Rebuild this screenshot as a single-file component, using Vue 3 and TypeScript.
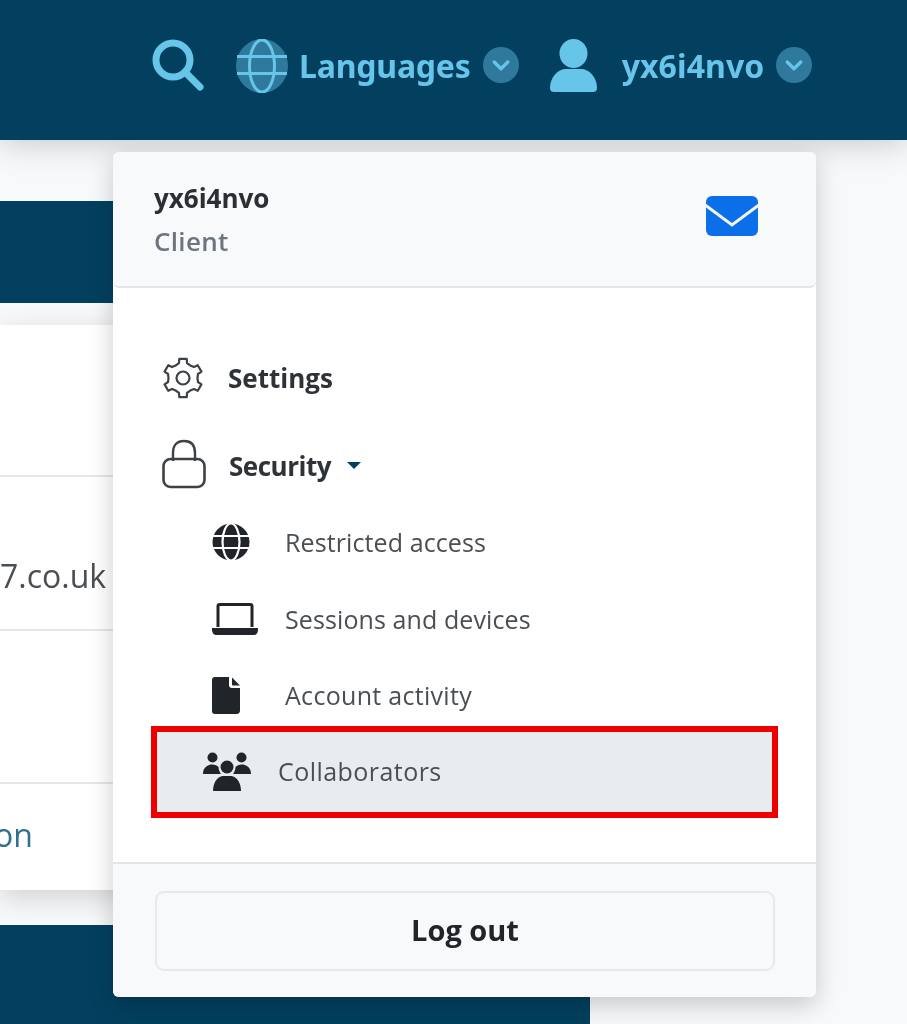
<script setup lang="ts">
const gearPath = (() => {
  const cx = 21, cy = 21;
  const pts: string[] = [];
  for (let i = 0; i < 6; i++) {
    const a = -90 + i * 60;
    const spec: [number, number][] = [[-30, 14.5], [-15, 15.5], [-11, 19.5], [11, 19.5], [15, 15.5]];
    for (const [d, r] of spec) {
      const t = ((a + d) * Math.PI) / 180;
      pts.push(`${(cx + r * Math.cos(t)).toFixed(2)} ${(cy + r * Math.sin(t)).toFixed(2)}`);
    }
  }
  return `M${pts.join('L')}Z`;
})();

const subItems = [
  { label: 'Restricted access', icon: 'globe' },
  { label: 'Sessions and devices', icon: 'laptop' },
  { label: 'Account activity', icon: 'file' },
];
</script>

<template>
  <div class="page">
    <header class="topbar">
      <svg class="ic-search" viewBox="0 0 52 52" aria-hidden="true">
        <circle cx="21" cy="21" r="17" fill="none" stroke="#66c5e8" stroke-width="7" />
        <path d="M33 33 L48 48" stroke="#66c5e8" stroke-width="7" stroke-linecap="round" />
      </svg>
      <svg class="ic-globe" viewBox="0 0 52 54" aria-hidden="true">
        <ellipse cx="26" cy="27" rx="26" ry="27" fill="#2f7a9c" />
        <ellipse cx="26" cy="27" rx="12.500" ry="26" fill="none" stroke="#66c5e8" stroke-width="3" />
        <path d="M1 17.500H51M1 34.500H51" stroke="#66c5e8" stroke-width="3" />
      </svg>
      <span class="top-label lang">Languages</span>
      <span class="chev">
        <svg viewBox="0 0 20 20" aria-hidden="true"><path d="M5.500 8 L10 12.500 L14.500 8" fill="none" stroke="#66c5e8" stroke-width="2.200" stroke-linecap="round" stroke-linejoin="round" /></svg>
      </span>
      <svg class="ic-user" viewBox="0 0 47 53" aria-hidden="true">
        <ellipse cx="23.500" cy="14.500" rx="14" ry="14.500" fill="#66c5e8" />
        <path d="M0 49 C0 38 8 30 16 30 H31 C39 30 47 38 47 49 C47 52 45 53 43 53 H4 C2 53 0 52 0 49 Z" fill="#66c5e8" />
      </svg>
      <span class="top-label name">yx6i4nvo</span>
      <span class="chev">
        <svg viewBox="0 0 20 20" aria-hidden="true"><path d="M5.500 8 L10 12.500 L14.500 8" fill="none" stroke="#66c5e8" stroke-width="2.200" stroke-linecap="round" stroke-linejoin="round" /></svg>
      </span>
    </header>

    <main class="content">
      <div class="strip"></div>
      <section class="card">
        <div class="card-row first"></div>
        <div class="card-row second"><span>7.co.uk</span></div>
        <div class="card-row third"></div>
        <div class="card-row last"><a class="link">on</a></div>
      </section>
      <div class="strip bottom"></div>
    </main>

    <aside class="menu">
      <div class="menu-head">
        <div>
          <div class="uname">yx6i4nvo</div>
          <div class="role">Client</div>
        </div>
        <svg class="ic-mail" viewBox="0 0 52 40" aria-hidden="true">
          <rect width="52" height="40" rx="6" fill="#0a6fe8" />
          <path d="M-1 9 L26 29 L53 9" fill="none" stroke="#f8f9fa" stroke-width="3" />
        </svg>
      </div>

      <div class="menu-body">
        <div class="row-main settings">
          <span class="main-ic">
            <svg class="ic-gear" viewBox="0 0 42 42" aria-hidden="true">
              <path :d="gearPath" fill="none" stroke="#3d4246" stroke-width="2.200" stroke-linejoin="round" />
              <circle cx="21" cy="21" r="6.500" fill="none" stroke="#3d4246" stroke-width="2.200" />
            </svg>
          </span>
          <span class="main-label">Settings</span>
        </div>

        <div class="row-main security">
          <span class="main-ic lock-wrap">
            <svg class="ic-lock" viewBox="0 0 44 50" aria-hidden="true">
              <path d="M11 22 V14 C11 6 15 2 22 2 C29 2 33 6 33 14 V22" fill="none" stroke="#3d4246" stroke-width="2.400" />
              <rect x="1.500" y="20" width="41" height="28" rx="7" fill="none" stroke="#3d4246" stroke-width="2.600" />
            </svg>
          </span>
          <span class="main-label sec">Security</span>
          <span class="caret"></span>
        </div>

        <div v-for="item in subItems" :key="item.label" class="row-sub">
          <span class="sub-ic">
            <svg v-if="item.icon === 'globe'" class="ic-sglobe" viewBox="0 0 38 38" aria-hidden="true">
              <circle cx="19" cy="19" r="18.500" fill="#212529" />
              <ellipse cx="19" cy="19" rx="8.500" ry="18.500" fill="none" stroke="#fff" stroke-width="2.200" />
              <path d="M1 13H37M1 25H37" stroke="#fff" stroke-width="2.200" />
            </svg>
            <svg v-else-if="item.icon === 'laptop'" class="ic-laptop" viewBox="0 0 46 32" aria-hidden="true">
              <path d="M6 24 V3 C6 2 7 1.500 8 1.500 H38 C39 1.500 40 2 40 3 V24" fill="none" stroke="#212529" stroke-width="3" />
              <path d="M0 25 H46 V27 C46 30 44 32 42 32 H4 C2 32 0 30 0 27 Z" fill="#212529" />
            </svg>
            <svg v-else class="ic-file" viewBox="0 0 28 37" aria-hidden="true">
              <path d="M3 0 H17 V8 C17 10 18 11 20 11 H28 V34 C28 36 26 37 25 37 H3 C1 37 0 36 0 34 V3 C0 1 1 0 3 0 Z" fill="#212529" />
              <path d="M20 0.500 L28 8.500 H21 C20.400 8.500 20 8 20 7.500 Z" fill="#212529" />
            </svg>
          </span>
          <span class="sub-text">{{ item.label }}</span>
        </div>

        <div class="row-active">
          <svg class="ic-users" viewBox="0 0 48 40" aria-hidden="true">
            <circle cx="9.500" cy="5.500" r="5" fill="#212529" />
            <circle cx="38.500" cy="5.500" r="5" fill="#212529" />
            <circle cx="24" cy="15" r="6.500" fill="#212529" />
            <path d="M0 22 C0 15 5 12.500 9.500 12.500 C12 12.500 14 13.500 15.500 15 C15.500 18 17 20.500 18 22 Z" fill="#212529" />
            <path d="M48 22 C48 15 43 12.500 38.500 12.500 C36 12.500 34 13.500 32.500 15 C32.500 18 31 20.500 30 22 Z" fill="#212529" />
            <path d="M10 39 C10 29 16 24 20 24 H28 C32 24 38 29 38 39 Z" fill="#212529" />
          </svg>
          <span class="active-text">Collaborators</span>
        </div>
      </div>

      <div class="menu-foot">
        <button class="logout" type="button">Log out</button>
      </div>
    </aside>
  </div>
</template>

<style>
html, body { margin: 0; background: #f8f9fa; }
</style>

<style scoped>
.page {
  position: relative;
  height: 1024px;
  overflow: hidden;
  background: #f8f9fa;
  font-family: "Open Sans", "Noto Sans", sans-serif;
  color: #212529;
  filter: blur(0.5px);
}
.topbar {
  position: relative;
  z-index: 2;
  height: 140px;
  box-sizing: border-box;
  background: #03405f;
  box-shadow: 0 0 34px rgba(0, 0, 0, 0.24);
  display: flex;
  align-items: flex-start;
  padding: 39px 0 0 152px;
}
.ic-search { width: 52px; height: 52px; margin-right: 32px; flex: none; }
.ic-globe { width: 52px; height: 54px; margin-right: 11px; flex: none; }
.top-label {
  color: #66c5e8;
  font-family: "Noto Sans", sans-serif;
  font-size: 32px;
  font-weight: 700;
  line-height: 54px;
  letter-spacing: -0.2px;
}
.top-label.name { letter-spacing: 0.1px; }
.chev {
  width: 36px;
  height: 36px;
  margin: 8px 0 0 12px;
  border-radius: 50%;
  background: #2f7a9c;
  display: flex;
  align-items: center;
  justify-content: center;
  flex: none;
}
.chev svg { width: 30px; height: 30px; }
.ic-user { width: 47px; height: 53px; margin: 0 25px 0 31px; flex: none; }

.content {
  width: 590px;
  padding-top: 61px;
}
.strip { height: 102px; background: #03405f; }
.strip.bottom { height: 120px; margin-top: 35px; }
.card {
  margin-top: 22px;
  height: 565px;
  background: #fff;
  box-shadow: 0 8px 28px rgba(0, 0, 0, 0.16);
  display: flex;
  flex-direction: column;
  font-size: 32px;
  color: #4a4f54;
}
.card-row { box-sizing: border-box; border-bottom: 2px solid #e4e6e8; display: flex; }
.first { height: 152px; }
.second { height: 154px; align-items: flex-end; padding-bottom: 32px; }
.third { height: 153px; }
.last { flex: 1; border-bottom: 0; align-items: center; padding-bottom: 6px; }
.link { color: #2f6f8f; margin-left: -6px; }

.menu {
  position: absolute;
  z-index: 3;
  left: 113px;
  top: 152px;
  width: 703px;
  height: 845px;
  display: flex;
  flex-direction: column;
  background: #fff;
  border-radius: 6px;
  box-shadow: 0 8px 26px rgba(0, 0, 0, 0.2);
}
.menu-head {
  height: 136px;
  box-sizing: border-box;
  padding: 27px 58px 0 41px;
  display: flex;
  justify-content: space-between;
  align-items: flex-start;
  background: #f8f9fa;
  border-bottom: 2px solid #e3e5e8;
  border-radius: 6px;
}
.uname { font-size: 26px; font-weight: 700; line-height: 38px; color: #2b2f33; }
.role { font-size: 26px; font-weight: 600; line-height: 38px; margin-top: 5px; letter-spacing: 0.3px; color: #6c757d; }
.ic-mail { width: 52px; height: 40px; margin-top: 17px; flex: none; }

.menu-body {
  flex: 1;
  padding-top: 60px;
}
.row-main {
  height: 60px;
  display: flex;
  align-items: center;
  margin-left: 49px;
  font-size: 26px;
  font-weight: 700;
  color: #2f3337;
}
.security { margin-top: 28px; margin-bottom: 8px; }
.main-ic { width: 44px; display: flex; margin-right: 22px; flex: none; }
.lock-wrap { margin-top: -5px; }
.main-label.sec { margin-left: 1px; letter-spacing: -0.5px; }
.ic-gear { width: 42px; height: 42px; }
.ic-lock { width: 44px; height: 50px; }
.caret {
  width: 0;
  height: 0;
  margin: -2px 0 0 16px;
  border-left: 7px solid transparent;
  border-right: 7px solid transparent;
  border-top: 7px solid #03405f;
}
.row-sub {
  height: 76.5px;
  display: flex;
  align-items: center;
  margin-left: 99px;
  font-size: 25px;
  color: #4a4f54;
}
.sub-text { letter-spacing: 0.1px; }
.row-sub:nth-child(5) .sub-text { letter-spacing: 0.3px; }
.sub-ic { width: 73px; display: flex; flex: none; }
.ic-sglobe { width: 38px; height: 38px; }
.ic-laptop { width: 46px; height: 32px; }
.ic-file { width: 28px; height: 37px; }
.row-active {
  box-sizing: border-box;
  margin: -8px 0 0 38px;
  width: 627px;
  height: 92px;
  padding-left: 46px;
  display: flex;
  align-items: center;
  gap: 27px;
  background: #e9ecef;
  border: 6px solid #ee0000;
  font-size: 25px;
  color: #4a4f54;
}
.active-text { letter-spacing: 0.45px; margin-top: -1px; }
.ic-users { width: 48px; height: 40px; flex: none; }

.menu-foot {
  height: 135px;
  box-sizing: border-box;
  padding: 27px 41px 0 42px;
  background: #f8f9fa;
  border-top: 2px solid #e3e5e8;
  border-radius: 0 0 6px 6px;
}
.logout {
  display: block;
  width: 100%;
  height: 80px;
  padding-bottom: 4px;
  border: 2px solid #e6e8ec;
  border-radius: 9px;
  background: transparent;
  font-family: inherit;
  font-size: 29px;
  font-weight: 700;
  color: #212529;
}
</style>
